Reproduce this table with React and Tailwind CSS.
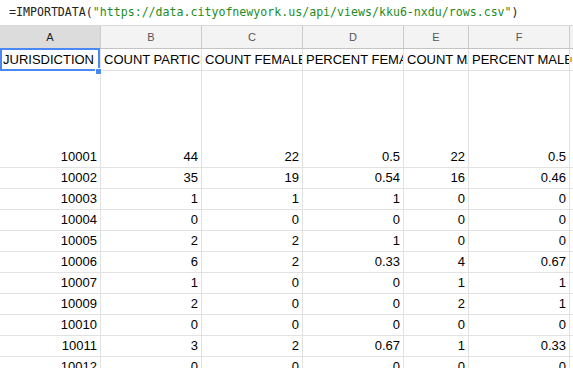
import React from 'react';

const cols = [
  { key: 'A', w: 'w-[101px]' },
  { key: 'B', w: 'w-[101px]' },
  { key: 'C', w: 'w-[101px]' },
  { key: 'D', w: 'w-[101px]' },
  { key: 'E', w: 'w-[65px]' },
  { key: 'F', w: 'w-[101px]' },
];

const titles = ['JURISDICTION NAME', 'COUNT PARTICIPANTS', 'COUNT FEMALE', 'PERCENT FEMALE', 'COUNT MALE', 'PERCENT MALE'];

const rows = [
  ['10001', '44', '22', '0.5', '22', '0.5'],
  ['10002', '35', '19', '0.54', '16', '0.46'],
  ['10003', '1', '1', '1', '0', '0'],
  ['10004', '0', '0', '0', '0', '0'],
  ['10005', '2', '2', '1', '0', '0'],
  ['10006', '6', '2', '0.33', '4', '0.67'],
  ['10007', '1', '0', '0', '1', '1'],
  ['10009', '2', '0', '0', '2', '1'],
  ['10010', '0', '0', '0', '0', '0'],
  ['10011', '3', '2', '0.67', '1', '0.33'],
  ['10012', '0', '0', '0', '0', '0'],
];

function Cell({ w, h, children, left }) {
  return (
    <div
      className={`${w} ${h} shrink-0 flex items-end ${left ? 'justify-start pl-[3px]' : 'justify-end pr-[3px]'} pb-[3px] overflow-hidden whitespace-nowrap border-r border-b border-[#e2e2e2] text-[13px] leading-[15px] text-black`}
    >
      {children}
    </div>
  );
}

export default function App() {
  return (
    <div className="w-[573px] h-[368px] overflow-hidden bg-white font-['Liberation_Sans',Arial,sans-serif]">
      {/* Formula bar */}
      <div className="h-[26px] flex items-center pl-[9px] border-b border-[#dadada] font-['DejaVu_Sans_Mono',monospace] text-[11.6px] text-[#222] whitespace-nowrap">
        <span>=IMPORTDATA(</span>
        <span className="text-[#1e8c1e]">"https://data.cityofnewyork.us/api/views/kku6-nxdu/rows.csv"</span>
        <span>)</span>
      </div>

      {/* Column headers */}
      <div className="flex h-[23px] bg-[#f3f3f3] border-b border-[#c4c4c4]">
        {cols.map((c) => (
          <div
            key={c.key}
            className={`${c.w} shrink-0 flex items-center justify-center border-r border-[#cccccc] text-[11px] ${c.key === 'A' ? 'bg-[#dcdcdc] text-[#222]' : 'text-[#555]'}`}
          >
            {c.key}
          </div>
        ))}
        <div className="flex-1" />
      </div>

      {/* Row 1: titles */}
      <div className="relative flex">
        {cols.map((c, i) => (
          <Cell key={c.key} w={c.w} h="h-[22px]" left>
            {titles[i]}
          </Cell>
        ))}
        <div className="flex-1 h-[22px] border-b border-[#e2e2e2] flex items-center">
          <div className="w-[2px] h-[5px] bg-[#f0b040]" />
        </div>
        {/* selection */}
        <div className="absolute left-0 top-[-1px] w-[100px] h-[23px] border-2 border-[#4a89f3] pointer-events-none" />
        <div className="absolute left-[95px] top-[19px] w-[7px] h-[7px] bg-[#4a89f3] border border-white" />
      </div>

      {/* Tall row 2 */}
      <div className="flex">
        {cols.map((c, i) => (
          <Cell key={c.key} w={c.w} h="h-[97px]">
            {rows[0][i]}
          </Cell>
        ))}
        <div className="flex-1 h-[97px] border-b border-[#e2e2e2]" />
      </div>

      {rows.slice(1).map((r) => (
        <div key={r[0]} className="flex">
          {cols.map((c, i) => (
            <Cell key={c.key} w={c.w} h="h-[21px]">
              {r[i]}
            </Cell>
          ))}
          <div className="flex-1 h-[21px] border-b border-[#e2e2e2]" />
        </div>
      ))}
    </div>
  );
}
